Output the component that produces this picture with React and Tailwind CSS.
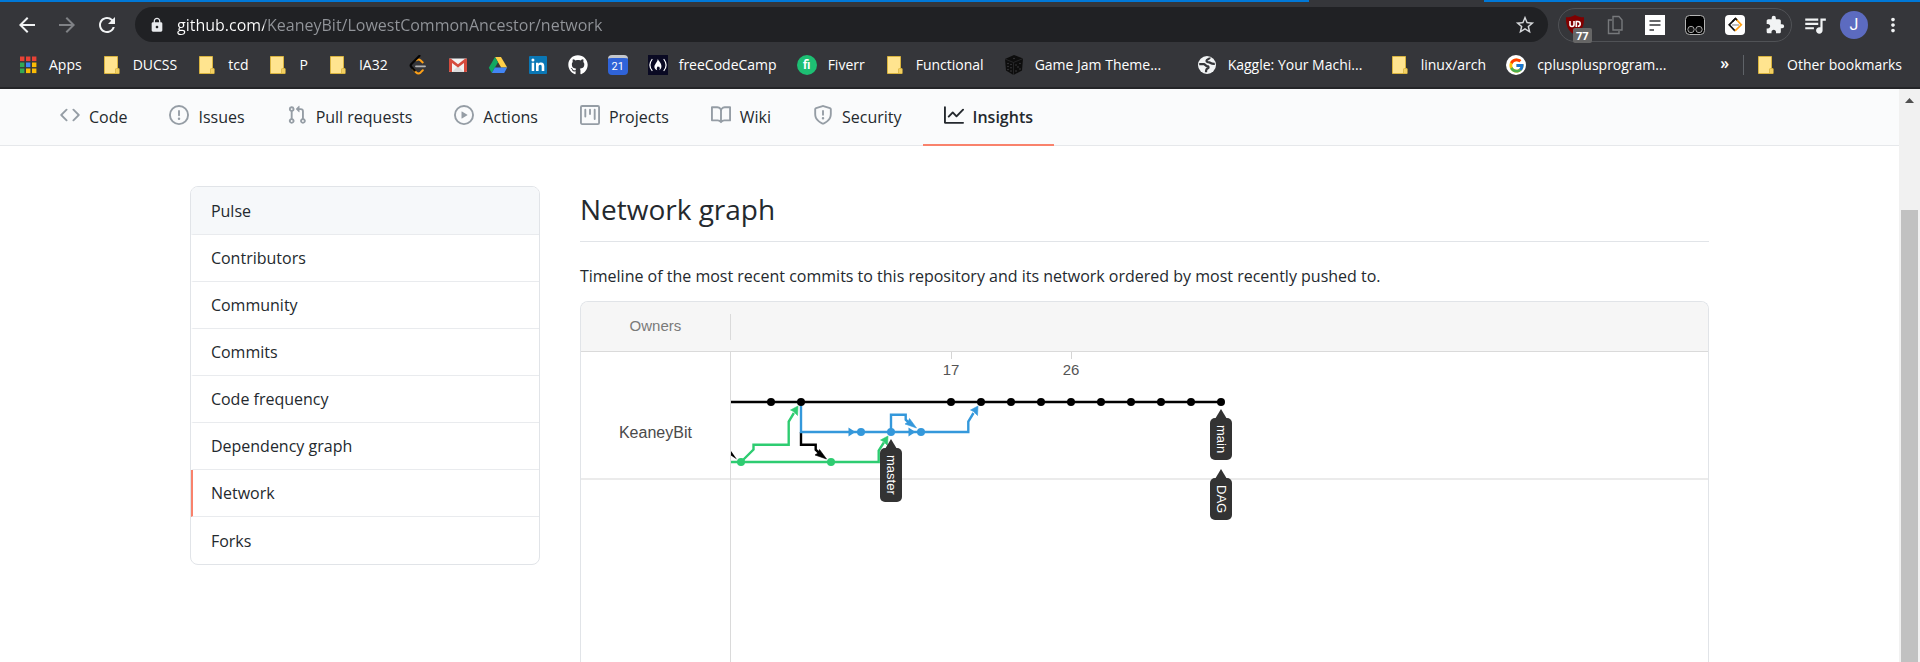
import React from "react";
import { MdArrowBack, MdArrowForward, MdRefresh, MdLock, MdStarBorder, MdExtension, MdQueueMusic, MdMoreVert } from "react-icons/md";
import { FaGithub } from "react-icons/fa";
import { FcGoogle } from "react-icons/fc";

/* ---------- Bookmark icons ---------- */

const Svg = ({ size = 20, className = "", children }) => (
  <svg width={size} height={size} viewBox="0 0 20 20" className={`shrink-0 ${className}`} aria-hidden="true">
    {children}
  </svg>
);

const AppsIcon = () => {
  const colors = ["#e94235", "#e94235", "#e94235", "#34a853", "#4285f4", "#fbbc05", "#34a853", "#fbbc05", "#fbbc05"];
  return (
    <Svg>
      {colors.map((c, i) => (
        <rect key={i} x={2 + (i % 3) * 6} y={1.5 + Math.floor(i / 3) * 6} width="4.4" height="4.6" fill={c} />
      ))}
    </Svg>
  );
};

const FolderIcon = () => (
  <Svg>
    <path d="M2.5 1.5h13v12.2h1.6v4.8H2.5z" fill="#ffe48f" stroke="#d9b43f" />
    <path d="M13.7 18.2v-4.4h3.3" fill="none" stroke="#d9b43f" />
    <path d="M14.2 14.3h2.5v3.8h-2.5z" fill="#f3cf5d" />
  </Svg>
);

const LeetIcon = () => (
  <Svg>
    <path d="M8.2 5.3c1.6-1.2 3.2-1 4.5.2l2 1.9M5 14l3 3.2c1.5 1.5 3.3 1.5 4.7.2l2.1-2.1" fill="none" stroke="#ffa116" strokeWidth="2" strokeLinecap="round" />
    <path d="M11.5.8 3.2 9.2a2 2 0 0 0 0 2.6l3.5 3.7" fill="none" stroke="#050505" strokeWidth="2.2" strokeLinecap="round" />
    <path d="M8 11.3h9" stroke="#b3b3b3" strokeWidth="1.8" strokeLinecap="round" />
  </Svg>
);

const GmailIcon = () => (
  <Svg>
    <rect x="1" y="3.5" width="18" height="13.5" rx="1" fill="#f2f2f2" />
    <path d="M4 17 10 11l6 6z" fill="#dcdcdc" />
    <path d="M1 4.5V16a1 1 0 0 0 1 1h2V8l6 4.6L16 8v9h2a1 1 0 0 0 1-1V4.5a1.2 1.2 0 0 0-2-.7l-7 5.4-7-5.4a1.2 1.2 0 0 0-2 .7z" fill="#d54b3d" />
  </Svg>
);

const DriveIcon = () => (
  <Svg>
    <path d="M7 2h6l6.2 10.5h-6z" fill="#ffcf48" />
    <path d="M7 2 .8 12.7l3 5.3L10 7.2z" fill="#11a861" />
    <path d="M6.9 12.5h12.3L16.2 18H3.8z" fill="#4285f4" />
  </Svg>
);

const LinkedInIcon = () => (
  <Svg>
    <rect x="1" y="1" width="18" height="18" rx="1" fill="#0a77b5" />
    <path d="M3.7 7.7h2.5V16H3.7zM8 7.7h2.4v1.2c.5-.9 1.4-1.4 2.7-1.4 2.3 0 3.2 1.4 3.2 3.8V16h-2.6v-4.3c0-1.2-.3-2-1.4-2s-1.7.8-1.7 2V16H8z" fill="#fff" />
    <circle cx="4.95" cy="5" r="1.5" fill="#fff" />
  </Svg>
);

const CalendarIcon = () => (
  <span className="flex h-5 w-5 shrink-0 items-center justify-center rounded-sm border-t-[3px] border-[#c4c7cc] bg-[#2f63d8] font-['Roboto',sans-serif] text-[11px] leading-none text-white">
    21
  </span>
);

const CampIcon = () => (
  <Svg>
    <rect width="20" height="20" fill="#0a0a23" />
    <path d="M4 4.5Q-.2 10 4 15.5M16 4.500q4.200 5.500 0 11" fill="none" stroke="#fff" strokeWidth="1.2" strokeLinecap="round" />
    <path d="M9.800 3.800c.4 2.200 4.200 4.600 3.600 8.200-.3 1.700-1.300 2.700-2.200 3.200.8-1 .9-2.200-.2-3.600-.5.700-1 .5-.9-.3-1.400 1-1.700 2.700-.8 3.900-1.700-.5-2.900-1.700-2.900-3.300C6.400 9.200 9.700 7 9.800 3.800z" fill="#fff" />
  </Svg>
);

const FiverrIcon = () => (
  <span className="flex h-5 w-5 shrink-0 items-center justify-center rounded-full bg-[#1dbf73] font-['Roboto',sans-serif] text-xs font-bold leading-none text-white">
    fi
  </span>
);

const DiceIcon = () => (
  <Svg>
    <path d="M10 0 19 3.5 18 15.5 9.5 20 2 15.5 1 4z" fill="#0d0d0d" />
    <path d="M1 4 9.5 7.5 19 3.5M9.5 7.5V20" fill="none" stroke="#2b2b2d" strokeWidth=".8" />
    {[[4, 8.5], [7, 9.5], [4, 11.5], [7, 12.8], [4, 14.5], [7, 16], [12, 10], [16, 8.5], [12, 16], [16, 14], [14, 12], [10, 3.5]].map(([x, y]) => (
      <circle key={`${x}-${y}`} cx={x} cy={y} r=".8" fill="#3c3c3f" />
    ))}
  </Svg>
);

const GlobeIcon = () => (
  <Svg>
    <circle cx="10" cy="10" r="9" fill="#f1f3f4" />
    <path d="M2.2 9.2h4.600c1.500.2 1.800 1.800 3.500 1.900 1.600 0 1.700 1.900.4 2.300-1.500.2-1.700 1.200-1.700 3.800" fill="none" stroke="#35363a" strokeWidth="2.200" strokeLinejoin="round" />
    <path d="M12.800 2.500c-.2 2-3 1.600-3.300 3.200-.2 1.500 1.400 1.600 2.800 1.700 1.600.3 1.500 1.600 5.500 1.400" fill="none" stroke="#35363a" strokeWidth="2.200" strokeLinejoin="round" />
  </Svg>
);

const GoogleIcon = () => (
  <span className="flex h-5 w-5 shrink-0 items-center justify-center rounded-full bg-white">
    <FcGoogle size={17} />
  </span>
);

const BOOKMARKS = [
  { label: "Apps", Icon: AppsIcon },
  { label: "DUCSS", Icon: FolderIcon },
  { label: "tcd", Icon: FolderIcon },
  { label: "P", Icon: FolderIcon },
  { label: "IA32", Icon: FolderIcon },
  { name: "LeetCode", Icon: LeetIcon },
  { name: "Gmail", Icon: GmailIcon },
  { name: "Drive", Icon: DriveIcon },
  { name: "LinkedIn", Icon: LinkedInIcon },
  { name: "GitHub", Icon: () => <FaGithub size={20} className="shrink-0 text-white" /> },
  { name: "Calendar", Icon: CalendarIcon },
  { label: "freeCodeCamp", Icon: CampIcon },
  { label: "Fiverr", Icon: FiverrIcon },
  { label: "Functional", Icon: FolderIcon },
  { label: "Game Jam Theme...", Icon: DiceIcon, wide: true },
  { label: "Kaggle: Your Machi...", Icon: GlobeIcon, wide: true },
  { label: "linux/arch", Icon: FolderIcon },
  { label: "cplusplusprogram...", Icon: GoogleIcon, wide: true },
];

const Bookmark = ({ label, name, Icon, wide }) => (
  <a href="#" aria-label={label || name} className="flex items-center gap-[11px] whitespace-nowrap">
    <Icon />
    {label && <span className={wide ? "min-w-[142px]" : ""}>{label}</span>}
  </a>
);

/* ---------- Extension icons ---------- */

const ShieldBadge = () => (
  <span className="relative block h-5 w-5">
    <Svg>
      <path d="M10 0c2.5 1.8 5.5 2.2 9 2.300C19.500 10 17 16.500 10 20 3 16.500.5 10 1 2.300 4.500 2.200 7.500 1.800 10 0z" fill="#800000" />
      <path d="M5 6v3.500a2 2 0 0 0 4 0V6M11.300 12V6.500h1.500a2.200 2.200 0 0 1 0 4.800" fill="none" stroke="#fff" strokeWidth="1.600" />
    </Svg>
    <span className="absolute -bottom-2 left-2 rounded-xs bg-[#666666] px-[3px] font-['Open_Sans',sans-serif] text-[11px] font-bold leading-[15px] text-white">
      77
    </span>
  </span>
);

const CopyIcon = () => (
  <Svg>
    <path d="M8 1.5h6l3 3.500v10H8z" fill="none" stroke="#77797c" strokeWidth="1.4" />
    <path d="M7 5H3.500v13.500H14V16" fill="none" stroke="#77797c" strokeWidth="1.4" />
  </Svg>
);

const NoteIcon = () => (
  <Svg>
    <rect width="20" height="20" fill="#fff" />
    <path d="M4.5 6h11M4.5 10h11M4.5 15H9" stroke="#35363a" strokeWidth="1.6" />
  </Svg>
);

const MonkeyIcon = () => (
  <Svg>
    <rect x=".5" y=".5" width="19" height="19" rx="4" fill="#000" stroke="#b5b5b5" />
    <circle cx="6" cy="14.5" r="3.2" fill="#161616" stroke="#a8a8a8" />
    <circle cx="14" cy="14.5" r="3.2" fill="#161616" stroke="#a8a8a8" />
  </Svg>
);

const LeetBoxIcon = () => (
  <Svg>
    <rect width="20" height="20" rx="4" fill="#fff" />
    <path d="M10.5 3.5 4.2 9.8 10 15.8" fill="none" stroke="#111" strokeWidth="1.7" />
    <path d="m10.5 3.5 5.8 6.3L10 15.8" fill="none" stroke="#ffa116" strokeWidth="1.7" />
    <path d="m7.5 6.5 3-3 1.5 1.6" fill="none" stroke="#111" strokeWidth="1.7" />
    <path d="M7 10h7" stroke="#aaa" strokeWidth="1.5" />
  </Svg>
);

const EXTENSIONS = [
  { name: "Blocker", Icon: ShieldBadge },
  { name: "Copy", Icon: CopyIcon },
  { name: "Notes", Icon: NoteIcon },
  { name: "Scripts", Icon: MonkeyIcon },
  { name: "Practice", Icon: LeetBoxIcon },
  { name: "Extensions", Icon: () => <MdExtension size={22} className="text-[#f1f3f4]" /> },
];

/* ---------- Browser chrome ---------- */

function BrowserChrome() {
  return (
    <header className="shrink-0 border-b-2 border-[#242528] bg-[#35363a]">
      <div className="flex h-0.5 bg-[#0078d7]">
        <div className="ml-[68.2%] w-[9.1%] bg-[#35363a]" />
      </div>
      <div className="flex h-[45px] items-center pr-4">
        <div className="flex w-[135px] items-center gap-4 pl-[15px] text-[#f1f3f4]">
          <button aria-label="Back" className="flex w-6 justify-center"><MdArrowBack size={24} /></button>
          <button aria-label="Forward" className="flex w-6 justify-center text-[#808286]"><MdArrowForward size={24} /></button>
          <button aria-label="Reload" className="flex w-6 justify-center"><MdRefresh size={24} /></button>
        </div>
        <div className="flex h-[35px] flex-1 items-center rounded-full bg-[#202124] pl-3.5 pr-3">
          <MdLock size={16} className="shrink-0 text-[#e8eaed]" />
          <input
            aria-label="Address"
            defaultValue="github.com/KeaneyBit/LowestCommonAncestor/network"
            className="ml-3 min-w-0 flex-1 bg-transparent bg-[linear-gradient(to_right,#ffffff_87px,#92959a_87px)] bg-clip-text text-base text-transparent outline-none"
          />
          <button aria-label="Bookmark this page"><MdStarBorder size={22} className="text-[#d5d7da]" /></button>
        </div>
        <div className="ml-2.5 flex h-[34px] items-center gap-5 rounded-full border border-[#505256] px-1.5">
          {EXTENSIONS.map(({ name, Icon }) => (
            <button key={name} aria-label={name} className="flex h-5 w-5 items-center justify-center">
              <Icon />
            </button>
          ))}
        </div>
        <button aria-label="Media controls" className="ml-2.5 text-[#f1f3f4]"><MdQueueMusic size={26} /></button>
        <button aria-label="Profile" className="ml-3 h-7 w-7 rounded-full bg-[#5c6bc0] font-['Roboto',sans-serif] text-base leading-7 text-white">
          J
        </button>
        <button aria-label="Menu" className="ml-3.5 text-[#f1f3f4]"><MdMoreVert size={22} /></button>
      </div>
      <nav aria-label="Bookmarks" className="mb-1 flex h-9 items-center gap-5 px-[18px] text-sm text-white">
        {BOOKMARKS.map((b) => (
          <Bookmark key={b.label || b.name} {...b} />
        ))}
        <button aria-label="More bookmarks" className="-mr-1.5 ml-auto pb-1 text-base font-semibold leading-none">»</button>
        <div className="-mr-2 h-5 w-px bg-[#5f6368]" />
        <Bookmark label="Other bookmarks" Icon={FolderIcon} />
      </nav>
    </header>
  );
}

/* ---------- Repository navigation ---------- */

const TABS = [
  { label: "Code", d: "M4.72 3.22a.75.75 0 011.06 1.06L2.06 8l3.72 3.72a.75.75 0 11-1.06 1.06L.47 8.53a.75.75 0 010-1.06l4.25-4.25zm6.56 0a.75.75 0 10-1.06 1.06L13.94 8l-3.72 3.72a.75.75 0 101.06 1.06l4.25-4.25a.75.75 0 000-1.06l-4.25-4.25z" },
  { label: "Issues", d: "M8 1.5a6.5 6.5 0 100 13 6.5 6.5 0 000-13zM0 8a8 8 0 1116 0A8 8 0 010 8zm9 3a1 1 0 11-2 0 1 1 0 012 0zm-.25-6.25a.75.75 0 00-1.5 0v3.5a.75.75 0 001.5 0v-3.5z" },
  { label: "Pull requests", d: "M7.177 3.073L9.573.677A.25.25 0 0110 .854v4.792a.25.25 0 01-.427.177L7.177 3.427a.25.25 0 010-.354zM3.75 2.5a.75.75 0 100 1.5.75.75 0 000-1.5zm-2.25.75a2.25 2.25 0 113 2.122v5.256a2.251 2.251 0 11-1.5 0V5.372A2.25 2.25 0 011.5 3.25zM11 2.5h-1V4h1a1 1 0 011 1v5.628a2.251 2.251 0 101.5 0V5A2.5 2.5 0 0011 2.5zm1 10.25a.75.75 0 111.5 0 .75.75 0 01-1.5 0zM3.75 12a.75.75 0 100 1.5.75.75 0 000-1.5z" },
  { label: "Actions", d: "M1.5 8a6.5 6.5 0 1113 0 6.5 6.5 0 01-13 0zM8 0a8 8 0 100 16A8 8 0 008 0zM6.379 5.227A.25.25 0 006 5.442v5.117a.25.25 0 00.379.214l4.264-2.559a.25.25 0 000-.428L6.379 5.227z" },
  { label: "Projects", d: "M1.75 0A1.75 1.75 0 000 1.75v12.5C0 15.216.784 16 1.75 16h12.5A1.75 1.75 0 0016 14.25V1.75A1.75 1.75 0 0014.25 0H1.75zM1.5 1.75a.25.25 0 01.25-.25h12.5a.25.25 0 01.25.25v12.5a.25.25 0 01-.25.25H1.75a.25.25 0 01-.25-.25V1.75zM11.75 3a.75.75 0 00-.75.75v7.5a.75.75 0 001.5 0v-7.5a.75.75 0 00-.75-.75zm-8.25.75a.75.75 0 011.5 0v5.5a.75.75 0 01-1.5 0v-5.5zM8 3a.75.75 0 00-.75.75v3.5a.75.75 0 001.5 0v-3.5A.75.75 0 008 3z" },
  { label: "Wiki", d: "M0 1.75A.75.75 0 01.75 1h4.253c1.227 0 2.317.59 3 1.501A3.744 3.744 0 0111.006 1h4.245a.75.75 0 01.75.75v10.5a.75.75 0 01-.75.75h-4.507a2.25 2.25 0 00-1.591.659l-.622.621a.75.75 0 01-1.06 0l-.622-.621A2.25 2.25 0 005.258 13H.75a.75.75 0 01-.75-.75V1.75zm8.755 3a2.25 2.25 0 012.25-2.25H14.5v9h-3.757c-.71 0-1.4.201-1.992.572l.004-7.322zm-1.504 7.324l.004-5.073-.002-2.253A2.25 2.25 0 005.003 2.5H1.5v9h3.757a3.75 3.75 0 011.994.574z" },
  { label: "Security", d: "M7.467.133a1.75 1.75 0 011.066 0l5.25 1.68A1.75 1.75 0 0115 3.48V7c0 1.566-.32 3.182-1.303 4.682-.983 1.498-2.585 2.813-5.032 3.855a1.7 1.7 0 01-1.33 0c-2.447-1.042-4.049-2.357-5.032-3.855C1.32 10.182 1 8.566 1 7V3.48a1.75 1.75 0 011.217-1.667l5.25-1.68zm.61 1.429a.25.25 0 00-.153 0l-5.25 1.68a.25.25 0 00-.174.238V7c0 1.358.275 2.666 1.057 3.86.784 1.194 2.121 2.34 4.366 3.297a.2.2 0 00.154 0c2.245-.956 3.582-2.104 4.366-3.298C13.225 9.666 13.5 8.36 13.5 7V3.48a.25.25 0 00-.174-.237l-5.25-1.68zM9 10.5a1 1 0 11-2 0 1 1 0 012 0zm-.25-5.75a.75.75 0 10-1.5 0v3a.75.75 0 001.5 0v-3z" },
  { label: "Insights", active: true, d: "M1.5 1.75a.75.75 0 00-1.5 0v12.5c0 .414.336.75.75.75h14.5a.75.75 0 000-1.5H1.5V1.75zm14.28 2.53a.75.75 0 00-1.06-1.06L10 7.94 7.53 5.47a.75.75 0 00-1.06 0L3.22 8.72a.75.75 0 001.06 1.06L7 7.06l2.47 2.47a.75.75 0 001.06 0l5.25-5.25z" },
];

function RepoTabs() {
  return (
    <nav aria-label="Repository" className="flex border-b border-[#e6e8eb] bg-[#fafbfc] pl-[39px]">
      {TABS.map(({ label, active, d }) => (
        <a
          key={label}
          href="#"
          aria-current={active ? "page" : undefined}
          className={`-mb-px flex h-[57px] items-center gap-[9px] border-b-2 px-[21px] text-base text-[#24292e] ${
            active ? "border-[#f9826c] font-semibold" : "border-transparent"
          }`}
        >
          <svg width="20" height="20" viewBox="0 0 16 16" className={`mb-1 shrink-0 ${active ? "fill-[#24292e]" : "fill-[#959da5]"}`} aria-hidden="true">
            <path fillRule="evenodd" d={d} />
          </svg>
          {label}
        </a>
      ))}
    </nav>
  );
}

/* ---------- Sidebar ---------- */

const MENU = ["Pulse", "Contributors", "Community", "Commits", "Code frequency", "Dependency graph", "Network", "Forks"];

function Sidebar() {
  return (
    <nav aria-label="Insights" className="w-[350px] shrink-0 self-start overflow-hidden rounded-lg border border-[#e1e4e8]">
      {MENU.map((item) => (
        <a
          key={item}
          href="#"
          aria-current={item === "Network" ? "page" : undefined}
          className={`flex h-[47px] items-center border-b border-l-2 border-b-[#e9ebee] pl-[18px] text-base text-[#24292e] first:h-12 last:border-b-0 ${
            item === "Pulse" ? "border-l-[#f6f8fa] bg-[#f6f8fa]" : item === "Network" ? "border-l-[#f9826c]" : "border-l-transparent"
          }`}
        >
          {item}
        </a>
      ))}
    </nav>
  );
}

/* ---------- Network graph ---------- */

const GREEN = "#2ecc71";
const BLUE = "#3498db";

const Tag = ({ x, y, height, text }) => (
  <g transform={`translate(${x} ${y})`}>
    <path d="M0 0 6 10H-6z" fill="#333" />
    <rect x="-11" y="9" width="22" height={height} rx="5" fill="#333" />
    <text transform="translate(-4 16) rotate(90)" fontSize="13" fill="#fff">{text}</text>
  </g>
);

const UpArrow = ({ x, y, color }) => <path d={`M${x} ${y}l-7.5 4 3 1.5 4 4z`} fill={color} stroke={color} strokeWidth=".6" />;
const SideArrow = ({ x, y, color }) => <path d={`M${x} ${y}l-7-4.5v9z`} fill={color} />;
const DownArrow = ({ x, y, color }) => <path d={`M${x} ${y}l-7-9.5-1.5 3.5-3 2z`} fill={color} stroke={color} strokeWidth=".6" />;

const COMMITS = [40, 70, 220, 250, 280, 310, 340, 370, 400, 430, 460, 490];

function NetworkDrawing() {
  return (
    <svg width="100%" height="320" className="block font-['Liberation_Sans',Arial,sans-serif]" role="img" aria-label="Commit network">
      <path d="M0 127h2000" stroke="#ebebeb" strokeWidth="2" />
      <path d="M220.5 0v7M340.5 0v7" stroke="#d5d5d5" />
      <g fontSize="15" fill="#555" textAnchor="middle">
        <text x="220" y="23">17</text>
        <text x="340" y="23">26</text>
      </g>
      <g fill="none" strokeWidth="2.4">
        <path d="M0 50h490" stroke="#000" />
        <path d="M70 80v12.7h14.7v5l4 4" stroke="#000" />
        <path d="M70 51v29h167.3V69.5l5.2-8.5M160 80V62.7h14.7v5l4 4" stroke={BLUE} />
        <path d="M0 110h147.7V98.5l5.2-8M10 110l12.5-12.5v-4.8h35.2V69.5L62.9 61" stroke={GREEN} />
      </g>
      <path d="M0 99l6 8.5-6-4z" fill="#000" />
      <UpArrow x={67} y={54} color={GREEN} />
      <UpArrow x={157} y={84} color={GREEN} />
      <UpArrow x={247} y={54} color={BLUE} />
      <SideArrow x={124.5} y={80} color={BLUE} />
      <SideArrow x={184.5} y={80} color={BLUE} />
      <DownArrow x={185.5} y={76} color={BLUE} />
      <DownArrow x={95.5} y={107} color="#000" />
      {COMMITS.map((x) => <circle key={x} cx={x} cy="50" r="4" fill="#000" />)}
      {[130, 160, 190].map((x) => <circle key={x} cx={x} cy="80" r="4" fill={BLUE} />)}
      {[10, 100].map((x) => <circle key={x} cx={x} cy="110" r="4" fill={GREEN} />)}
      <Tag x={160} y={87} height={54} text="master" />
      <Tag x={490} y={57} height={42} text="main" />
      <Tag x={490} y={117} height={42} text="DAG" />
    </svg>
  );
}

function NetworkPanel() {
  return (
    <section className="min-w-0 flex-1 pt-[3px]">
      <h2 className="border-b border-[#e1e4e8] pb-3 text-[28px] leading-10 text-[#24292e]">Network graph</h2>
      <p className="pb-[13px] pt-[22px] text-base leading-6 text-[#24292e]">
        Timeline of the most recent commits to this repository and its network ordered by most recently pushed to.
      </p>
      <div className="overflow-hidden rounded-t-lg border border-b-0 border-[#e1e4e8] font-['Liberation_Sans',Arial,sans-serif]">
        <div className="flex h-[50px] items-center border-b border-[#dadada] bg-[#f6f6f6]">
          <div className="flex h-[26px] w-[150px] items-center justify-center border-r border-[#dadada] text-[15px] text-[#7a7a7a]">Owners</div>
        </div>
        <div className="flex">
          <div className="w-[150px] shrink-0 border-r border-[#dadada]">
            <div className="flex h-[128px] items-center justify-center border-b-2 border-[#ebebeb] pt-9 text-base text-[#4a4a4a]">KeaneyBit</div>
          </div>
          <div className="min-w-0 flex-1">
            <NetworkDrawing />
          </div>
        </div>
      </div>
    </section>
  );
}

/* ---------- Page ---------- */

export default function App() {
  return (
    <div className="flex h-screen flex-col overflow-hidden bg-white font-['Open_Sans','Noto_Sans',sans-serif]">
      <BrowserChrome />
      <div className="flex min-h-0 flex-1">
        <div className="min-w-0 flex-1 overflow-hidden">
          <RepoTabs />
          <main className="mx-auto flex w-4/5 gap-10 pt-10">
            <Sidebar />
            <NetworkPanel />
          </main>
        </div>
        <div className="flex w-[21px] shrink-0 flex-col items-center bg-[#f1f1f1]" aria-hidden="true">
          <svg width="9" height="5" viewBox="0 0 9 5" className="mt-[9px] shrink-0">
            <path d="M4.5 0 9 5H0z" fill="#505050" />
          </svg>
          <div className="mt-[107px] w-[17px] flex-1 bg-[#c1c1c1]" />
        </div>
      </div>
    </div>
  );
}
